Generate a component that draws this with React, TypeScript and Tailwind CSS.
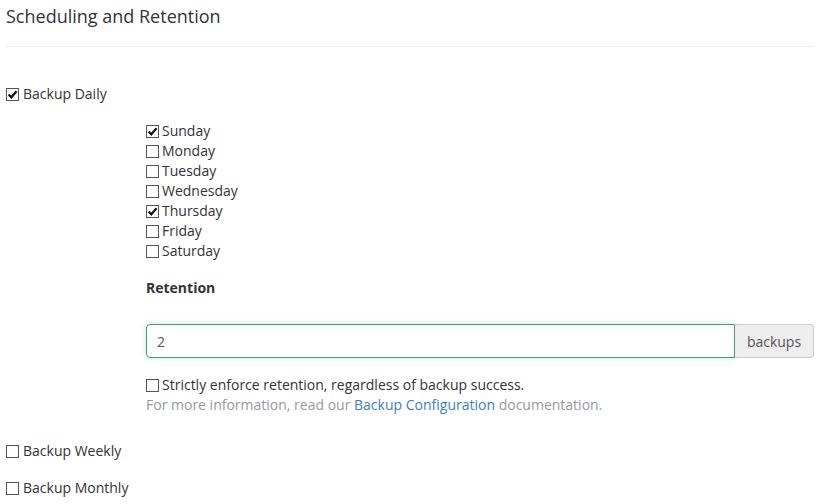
import React from "react";

// Small square checkbox, drawn to match the classic look
function Box({ checked }: { checked?: boolean }) {
  return (
    <span className="inline-flex h-[13px] w-[13px] shrink-0 items-center justify-center border border-[#555] bg-white">
      {checked && (
        <svg viewBox="0 0 12 12" className="h-[11px] w-[11px]">
          <path d="M1.8 6 L4.7 9 L10.4 2.4" fill="none" stroke="#111" strokeWidth="2.4" />
        </svg>
      )}
    </span>
  );
}

function Check({ label, checked, gap = "gap-[3px]" }: { label: string; checked?: boolean; gap?: string }) {
  return (
    <label className={`flex h-[20px] items-center ${gap} text-[14px] leading-[20px] text-[#333]`}>
      <Box checked={checked} />
      <span>{label}</span>
    </label>
  );
}

const days: [string, boolean][] = [
  ["Sunday", true],
  ["Monday", false],
  ["Tuesday", false],
  ["Wednesday", false],
  ["Thursday", true],
  ["Friday", false],
  ["Saturday", false],
];

export default function App() {
  return (
    <div className="w-[821px] h-[504px] overflow-hidden bg-white px-[6px] pt-[4px] font-['Open_Sans',sans-serif] text-[#333]">
      <h2 className="h-[24px] text-[18px] leading-[24px] font-normal text-[#333]">Scheduling and Retention</h2>
      <div className="mt-[18px] w-[808px] border-t border-[#eee]" />

      <div className="mt-[37px]">
        <Check label="Backup Daily" checked gap="gap-[4px]" />
      </div>

      <div className="ml-[140px] w-[668px]">
        <div className="mt-[17px]">
          {days.map(([d, c]) => (
            <Check key={d} label={d} checked={c} />
          ))}
        </div>

        <div className="mt-[17px] h-[20px] text-[14px] leading-[20px] font-bold text-[#333]">Retention</div>

        <div className="mt-[26px] flex h-[34px]">
          <div className="flex w-[589px] items-center rounded-l-[4px] border border-[#3fa45a] px-[10px] text-[14px] text-[#555] shadow-[0_0_6px_rgba(60,140,200,0.25)]">
            2
          </div>
          <div className="flex flex-1 items-center justify-center rounded-r-[4px] border border-l-0 border-[#ccc] bg-[#eee] text-[14px] text-[#555]">
            backups
          </div>
        </div>

        <div className="mt-[17px]">
          <Check label="Strictly enforce retention, regardless of backup success." />
        </div>
        <p className="h-[20px] text-[14px] leading-[20px] text-[#999]">
          For more information, read our <a className="text-[#3a7fc4]">Backup Configuration</a> documentation.
        </p>
      </div>

      <div className="mt-[26px]">
        <Check label="Backup Weekly" gap="gap-[4px]" />
      </div>
      <div className="mt-[17px]">
        <Check label="Backup Monthly" gap="gap-[4px]" />
      </div>
    </div>
  );
}
